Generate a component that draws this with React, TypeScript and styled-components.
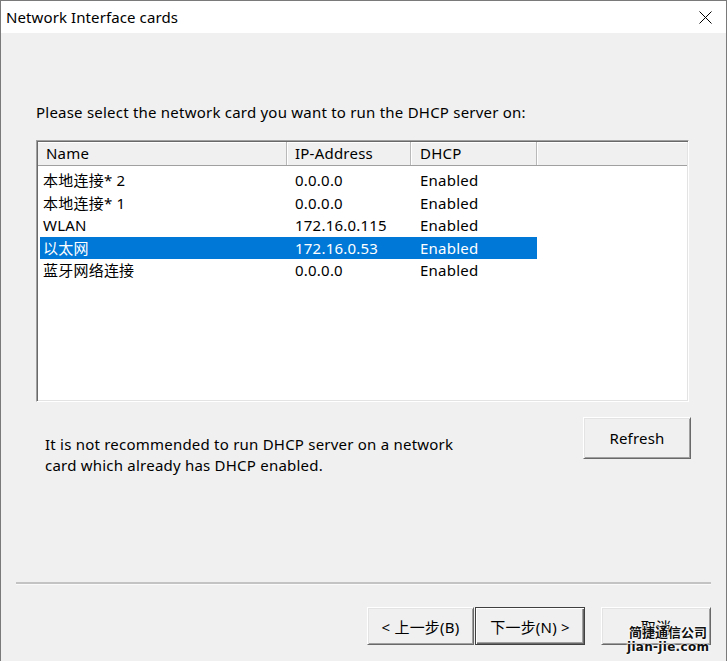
import React from "react";
import styled, { createGlobalStyle } from "styled-components";

const GlobalStyle = createGlobalStyle`
  html, body { margin: 0; padding: 0; background: #f0f0f0; }
  body { font-family: "Noto Sans", "Noto Sans CJK SC", sans-serif; }
  * { box-sizing: border-box; }
`;

const Window = styled.div`
  width: 727px;
  height: 661px;
  display: flex;
  flex-direction: column;
  background: #f0f0f0;
  border: 1px solid #7a7a7a;
  border-bottom: none;
  font-family: "Noto Sans", "Noto Sans CJK SC", sans-serif;
  font-size: 15px;
  letter-spacing: 0.22px;
  color: #000;
  position: relative;
  overflow: hidden;
`;

const TitleBar = styled.div`
  height: 32px;
  flex: none;
  background: #fff;
  display: flex;
  align-items: center;
  justify-content: space-between;
  padding: 0 14px 0 5px;
`;

const Title = styled.span`
  font-size: 15px;
  line-height: 20px;
  letter-spacing: 0.1px;
  color: #000;
`;

const Close = styled.svg`
  width: 13px;
  height: 13px;
  display: block;
`;

const Content = styled.div`
  flex: 1;
  display: flex;
  flex-direction: column;
  padding: 69px 37px 0 35px;
`;

const Prompt = styled.div`
  line-height: 20px;
  margin-bottom: 18px;
`;

const ListBox = styled.div`
  height: 262px;
  background: #fff;
  border: 1px solid;
  border-color: #a0a0a0 #ffffff #ffffff #a0a0a0;
  box-shadow: inset 1px 1px 0 #696969, inset -1px -1px 0 #e3e3e3;
  padding: 1px;
  display: flex;
  flex-direction: column;
`;

const Header = styled.div`
  display: grid;
  grid-template-columns: 249px 124px 126px 1fr;
  height: 24px;
  background: #f0f0f0;
  border-bottom: 1px solid #a0a0a0;
  box-shadow: inset 0 1px 0 #fff;
`;

const HeaderCell = styled.div<{ $pad: number; $last?: boolean }>`
  padding-left: ${(p) => p.$pad}px;
  line-height: 23px;
  border-right: ${(p) => (p.$last ? "none" : "1px solid #b9b9b9")};
  box-shadow: ${(p) => (p.$last ? "none" : "1px 0 0 #fff")};
  color: #000;
`;

const Rows = styled.div`
  padding: 3px 0 0 2px;
  display: flex;
  flex-direction: column;
`;

const Row = styled.div<{ $selected?: boolean }>`
  display: grid;
  grid-template-columns: 246px 124px 127px;
  width: 497px;
  height: 22.5px;
  line-height: 22px;
  background: ${(p) => (p.$selected ? "#0078d7" : "transparent")};
  color: ${(p) => (p.$selected ? "#fff" : "#000")};
`;

const Cell = styled.div<{ $pad: number }>`
  padding-left: ${(p) => p.$pad}px;
  white-space: nowrap;
`;

const InfoRow = styled.div`
  display: flex;
  justify-content: space-between;
  align-items: flex-start;
  margin-top: 15px;
`;

const Info = styled.div`
  margin-left: 9px;
  margin-top: 17px;
  line-height: 21px;
`;

const WinButton = styled.button<{ $default?: boolean; $w: number; $h?: number }>`
  width: ${(p) => p.$w}px;
  height: ${(p) => (p.$h ? p.$h : 38)}px;
  font-family: "Noto Sans", "Noto Sans CJK SC", sans-serif;
  font-size: 15px;
  letter-spacing: 0.2px;
  color: #000;
  background: #f0f0f0;
  border: 1px solid;
  border-color: ${(p) =>
    p.$default ? "#404040" : "#ffffff #696969 #696969 #ffffff"};
  box-shadow: ${(p) =>
    p.$default
      ? "inset 1px 1px 0 #fff, inset -1px -1px 0 #696969, inset -2px -2px 0 #a0a0a0"
      : "inset 1px 1px 0 #e3e3e3, inset -1px -1px 0 #a0a0a0"};
  padding: 0;
  margin: 0;
  display: flex;
  align-items: center;
  justify-content: center;
`;

const RefreshWrap = styled.div`
  margin-right: -2px;
`;

const Divider = styled.div`
  flex: none;
  margin: 0 15px;
  height: 3px;
  border-top: 2px solid #c3c3c3;
  border-bottom: 1px solid #fafafa;
`;

const ButtonBar = styled.div`
  flex: none;
  height: 76px;
  display: flex;
  justify-content: flex-end;
  align-items: flex-start;
  padding: 22px 15px 0 0;
`;

const NavGroup = styled.div`
  display: flex;
  gap: 1px;
  margin-right: 16px;
`;

const Watermark = styled.div`
  position: absolute;
  left: 626px;
  top: 623px;
  display: flex;
  flex-direction: column;
  align-items: center;
  font-weight: 700;
  color: #111;
  letter-spacing: 0;
  text-shadow: 0 0 2px #fff, 0 0 2px #fff, 0 0 3px #fff;
`;

const WmCn = styled.span`
  font-family: "Noto Sans CJK SC", sans-serif;
  font-size: 13px;
  line-height: 16px;
`;

const WmEn = styled.span`
  font-family: "DejaVu Sans", sans-serif;
  font-size: 12px;
  line-height: 15px;
  letter-spacing: 0.3px;
`;

const rows = [
  { name: "本地连接* 2", ip: "0.0.0.0", dhcp: "Enabled" },
  { name: "本地连接* 1", ip: "0.0.0.0", dhcp: "Enabled" },
  { name: "WLAN", ip: "172.16.0.115", dhcp: "Enabled" },
  { name: "以太网", ip: "172.16.0.53", dhcp: "Enabled", selected: true },
  { name: "蓝牙网络连接", ip: "0.0.0.0", dhcp: "Enabled" },
];

export default function App() {
  return (
    <>
      <GlobalStyle />
      <Window>
        <TitleBar>
          <Title>Network Interface cards</Title>
          <Close viewBox="0 0 13 13">
            <path d="M0.5 0.5 L12.5 12.5 M12.5 0.5 L0.5 12.5" stroke="#000" strokeWidth="1" fill="none" />
          </Close>
        </TitleBar>
        <Content>
          <Prompt>Please select the network card you want to run the DHCP server on:</Prompt>
          <ListBox>
            <Header>
              <HeaderCell $pad={8}>Name</HeaderCell>
              <HeaderCell $pad={8}>IP-Address</HeaderCell>
              <HeaderCell $pad={9}>DHCP</HeaderCell>
              <HeaderCell $pad={0} $last />
            </Header>
            <Rows>
              {rows.map((r) => (
                <Row key={r.name} $selected={r.selected}>
                  <Cell $pad={3}>{r.name}</Cell>
                  <Cell $pad={9}>{r.ip}</Cell>
                  <Cell $pad={10}>{r.dhcp}</Cell>
                </Row>
              ))}
            </Rows>
          </ListBox>
          <InfoRow>
            <Info>
              It is not recommended to run DHCP server on a network
              <br />
              card which already has DHCP enabled.
            </Info>
            <RefreshWrap>
              <WinButton $w={108} $h={42}>Refresh</WinButton>
            </RefreshWrap>
          </InfoRow>
        </Content>
        <Divider />
        <ButtonBar>
          <NavGroup>
            <WinButton $w={107}>&lt; 上一步(B)</WinButton>
            <WinButton $w={110} $default>下一步(N) &gt;</WinButton>
          </NavGroup>
          <WinButton $w={110}>取消</WinButton>
        </ButtonBar>
        <Watermark>
          <WmCn>简捷通信公司</WmCn>
          <WmEn>jian-jie.com</WmEn>
        </Watermark>
      </Window>
    </>
  );
}
